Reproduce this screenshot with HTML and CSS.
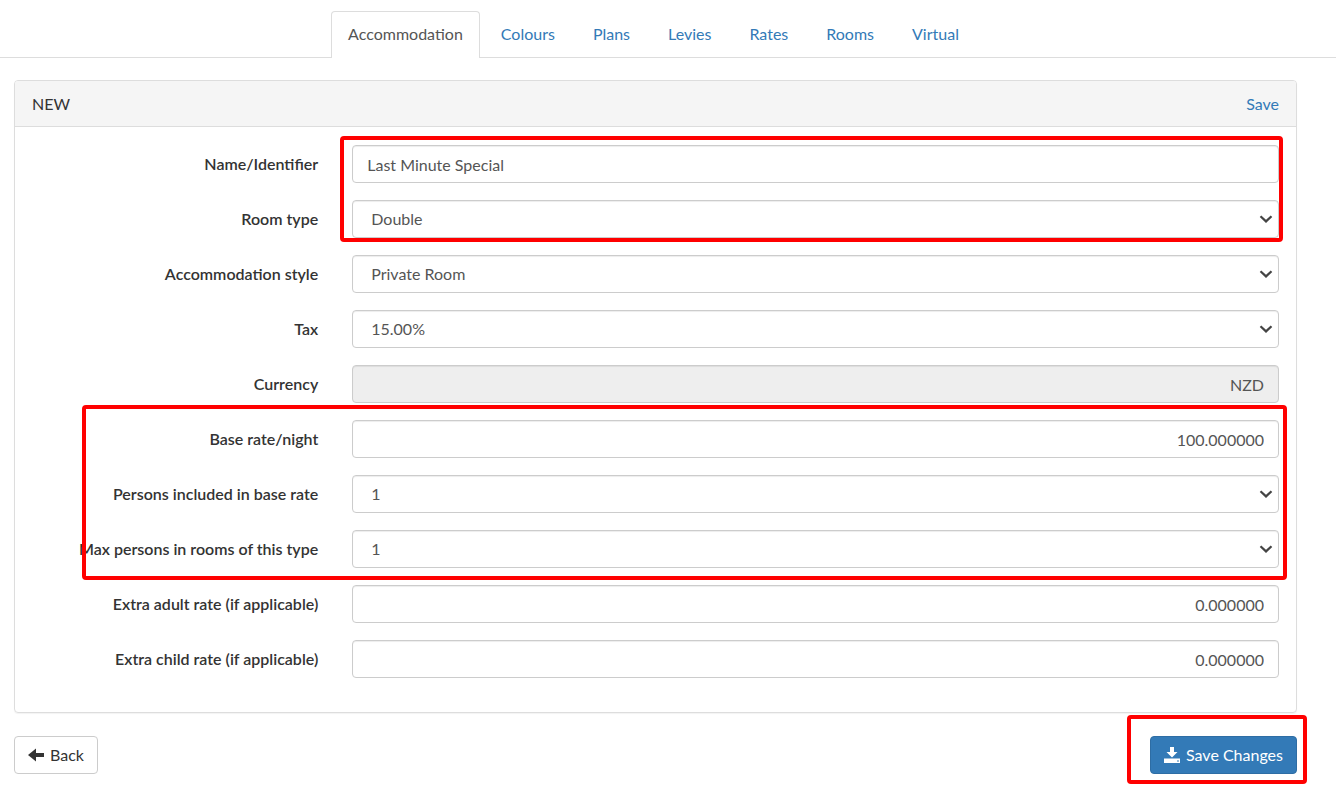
FILE: index.html
```html
<!DOCTYPE html>
<html lang="en">
<head>
<meta charset="utf-8">
<title>Accommodation</title>
<link rel="stylesheet" href="styles.css">
</head>
<body>
<svg class="sprite" aria-hidden="true">
  <symbol id="chevron" viewBox="0 0 14 8"><path d="M1.5 1.2 L7 6.4 L12.5 1.2" fill="none" stroke="currentColor" stroke-width="2.200"/></symbol>
</svg>
<nav class="tabs">
  <a class="tab active" href="#accommodation">Accommodation</a>
  <a class="tab" href="#colours">Colours</a>
  <a class="tab" href="#plans">Plans</a>
  <a class="tab" href="#levies">Levies</a>
  <a class="tab" href="#rates">Rates</a>
  <a class="tab" href="#rooms">Rooms</a>
  <a class="tab" href="#virtual">Virtual</a>
</nav>
<main class="page">
  <form>
    <section class="panel">
      <header class="panel-head"><span>NEW</span><a href="#save">Save</a></header>
      <div class="panel-body">
        <div class="group">
          <div class="row"><label for="name">Name/Identifier</label><div class="field"><input class="control" id="name" type="text" value="Last Minute Special"></div></div>
          <div class="row"><label for="room">Room type</label><div class="field"><select class="control" id="room"><option>Double</option></select><svg class="chevron"><use href="#chevron"/></svg></div></div>
          <span class="mark mark-name"></span>
        </div>
        <div class="group">
          <div class="row"><label for="style">Accommodation style</label><div class="field"><select class="control" id="style"><option>Private Room</option></select><svg class="chevron"><use href="#chevron"/></svg></div></div>
          <div class="row"><label for="tax">Tax</label><div class="field"><select class="control" id="tax"><option>15.00%</option></select><svg class="chevron"><use href="#chevron"/></svg></div></div>
          <div class="row"><label for="currency">Currency</label><div class="field"><input class="control amount" id="currency" type="text" value="NZD" disabled></div></div>
        </div>
        <div class="group">
          <div class="row"><label for="base">Base rate/night</label><div class="field"><input class="control amount" id="base" type="text" value="100.000000"></div></div>
          <div class="row"><label for="included">Persons included in base rate</label><div class="field"><select class="control" id="included"><option>1</option></select><svg class="chevron"><use href="#chevron"/></svg></div></div>
          <div class="row"><label for="max">Max persons in rooms of this type</label><div class="field"><select class="control" id="max"><option>1</option></select><svg class="chevron"><use href="#chevron"/></svg></div></div>
          <span class="mark mark-rates"></span>
        </div>
        <div class="group">
          <div class="row"><label for="adult">Extra adult rate (if applicable)</label><div class="field"><input class="control amount" id="adult" type="text" value="0.000000"></div></div>
          <div class="row"><label for="child">Extra child rate (if applicable)</label><div class="field"><input class="control amount" id="child" type="text" value="0.000000"></div></div>
        </div>
      </div>
    </section>
    <div class="actions">
      <button class="btn" type="button"><svg class="icon" viewBox="0 0 16 16"><path d="M0 8 L8 1.5 V6 H16 V10 H8 V14.5 Z" fill="currentColor"/></svg>Back</button>
      <div class="save">
        <button class="btn primary" type="submit"><svg class="icon" viewBox="0 0 16 16"><path d="M6 0 H10 V5 H13.5 L8 10.5 L2.500 5 H6 Z M0 11.500 H16 V16 H0 Z M13 13.500 V14.500 H15 V13.500 Z" fill="currentColor" fill-rule="evenodd"/></svg>Save Changes</button>
        <span class="mark mark-save"></span>
      </div>
    </div>
  </form>
</main>
</body>
</html>
```
FILE: styles.css
```css
* { box-sizing: border-box; }

body {
  margin: 0;
  background: #fff;
  color: #333;
  font: 16px/22px Lato, "Liberation Sans", sans-serif;
}

a { color: #337ab7; text-decoration: none; }

.sprite { display: none; }

.tabs {
  display: flex;
  justify-content: center;
  padding: 11px 39px 0 14px;
  border-bottom: 1px solid #ddd;
}

.tab {
  margin: 0 4px -1px 0;
  padding: 11px 16px 13px;
  border: 1px solid transparent;
  border-bottom: 0;
  border-radius: 4px 4px 0 0;
}

.tab.active {
  border-color: #ddd;
  background: #fff;
  color: #555;
}

.page { padding: 22px 39px 16px 14px; }

.panel {
  border: 1px solid #ddd;
  border-radius: 4px;
  box-shadow: 0 1px 1px rgba(0, 0, 0, .05);
}

.panel-head {
  display: flex;
  justify-content: space-between;
  padding: 12px 17px 11px;
  border-bottom: 1px solid #ddd;
  border-radius: 3px 3px 0 0;
  background: #f5f5f5;
}

.panel-body {
  display: grid;
  gap: 17px;
  padding: 18px 0 34px;
}

.group {
  position: relative;
  display: grid;
  gap: 17px;
}

.row {
  display: grid;
  grid-template-columns: 25% 75%;
}

.row label {
  padding: 8px 17px 8px 0;
  font-weight: 600;
  text-align: right;
  white-space: nowrap;
}

.field {
  position: relative;
  padding: 0 17px;
}

.control {
  display: block;
  width: 100%;
  height: 38px;
  margin: 0;
  padding: 0 14px;
  border: 1px solid #ccc;
  border-radius: 4px;
  background: #fff;
  box-shadow: inset 0 1px 1px rgba(0, 0, 0, .075);
  color: #555;
  font: inherit;
  appearance: none;
}

select.control { padding: 0 18px; }

.control:disabled { background: #eee; }

.amount { text-align: right; }

.chevron {
  position: absolute;
  top: 15px;
  right: 23px;
  width: 14px;
  height: 8px;
  color: #444;
  pointer-events: none;
}

.mark {
  position: absolute;
  border: 4px solid #f00;
  border-radius: 4px;
  pointer-events: none;
}

.mark-name { inset: -9px 13px -4px calc(25% + 5px); }
.mark-rates { inset: -15px 9px -12px 67px; }
.mark-save { inset: -21px -10px -10px -23px; }

.actions {
  display: flex;
  justify-content: space-between;
  padding-top: 23px;
}

.save { position: relative; }

.btn {
  display: flex;
  align-items: center;
  gap: 6px;
  height: 38px;
  padding: 0 13px;
  border: 1px solid #ccc;
  border-radius: 4px;
  background: #fff;
  color: #333;
  font: inherit;
}

.btn.primary {
  border-color: #2e6da4;
  background: #337ab7;
  color: #fff;
}

.icon { width: 16px; height: 16px; }
```
